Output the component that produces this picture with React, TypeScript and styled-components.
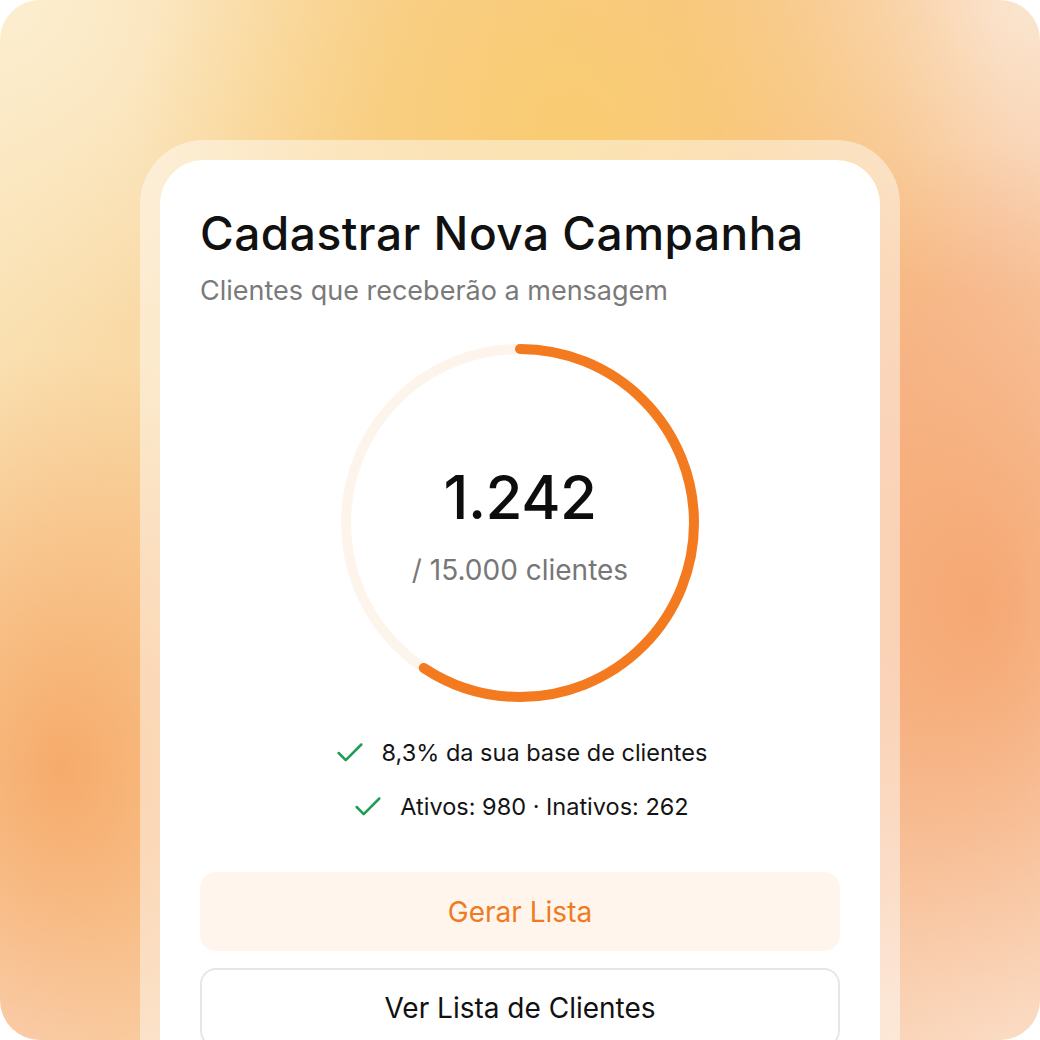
import { createGlobalStyle } from 'styled-components';
import styled from 'styled-components';
import { Check } from 'lucide-react';

const GlobalStyle = createGlobalStyle`
  html, body {
    margin: 0;
    padding: 0;
    background: #ffffff;
  }
  body {
    font-family: Inter, "Noto Sans", "Liberation Sans", sans-serif;
    -webkit-font-smoothing: antialiased;
  }
`;

const Backdrop = styled.div`
  width: 1040px;
  height: 1040px;
  border-radius: 40px;
  overflow: hidden;
  box-sizing: border-box;
  padding-top: 140px;
  display: flex;
  justify-content: center;
  background:
    radial-gradient(ellipse 440px 360px at 55% 12%, rgba(249, 205, 112, 0.9), rgba(249, 205, 112, 0) 100%),
    radial-gradient(ellipse 300px 460px at 94% 58%, rgba(245, 162, 106, 0.85), rgba(245, 162, 106, 0) 100%),
    radial-gradient(ellipse 300px 420px at 6% 74%, rgba(246, 168, 104, 0.95), rgba(246, 168, 104, 0) 100%),
    radial-gradient(ellipse 400px 340px at 0% 0%, rgba(252, 238, 208, 1), rgba(252, 238, 208, 0) 100%),
    radial-gradient(ellipse 380px 360px at 100% 100%, rgba(251, 222, 200, 1), rgba(251, 222, 200, 0) 100%),
    radial-gradient(ellipse 300px 300px at 0% 100%, rgba(251, 220, 198, 1), rgba(251, 220, 198, 0) 100%),
    radial-gradient(ellipse 360px 300px at 100% 0%, rgba(251, 230, 208, 1), rgba(251, 230, 208, 0) 100%),
    linear-gradient(100deg, #fae3b6 0%, #f8c989 45%, #f7b98a 75%, #f9d4b8 100%);
`;

const Frame = styled.div`
  width: 760px;
  box-sizing: border-box;
  padding: 20px 20px 0;
  border-radius: 64px 64px 0 0;
  background: rgba(255, 255, 255, 0.45);
  height: 920px;
`;

const Card = styled.div`
  background: #ffffff;
  border-radius: 44px 44px 0 0;
  height: 100%;
  box-sizing: border-box;
  padding: 45px 40px 0;
  display: flex;
  flex-direction: column;
`;

const Title = styled.h1`
  margin: 0;
  font-size: 46px;
  line-height: 56px;
  font-weight: 500;
  color: #111111;
  letter-spacing: 0.5px;
`;

const Subtitle = styled.p`
  margin: 14px 0 0;
  font-size: 27px;
  line-height: 32px;
  font-weight: 400;
  color: #7a7a7a;
`;

const Gauge = styled.div`
  position: relative;
  width: 360px;
  height: 360px;
  margin: 36px auto 0;
`;

const GaugeLabel = styled.div`
  position: absolute;
  inset: 0;
  display: flex;
  flex-direction: column;
  align-items: center;
  justify-content: center;
  padding-top: 2px;
`;

const Count = styled.div`
  font-size: 60px;
  line-height: 72px;
  font-weight: 500;
  color: #0d0d0d;
  letter-spacing: -0.5px;
`;

const Total = styled.div`
  margin-top: 20px;
  font-size: 28px;
  line-height: 34px;
  color: #777777;
`;

const Facts = styled.ul`
  list-style: none;
  margin: 33px 0 0;
  padding: 0;
  display: flex;
  flex-direction: column;
  align-items: center;
  gap: 20px;
`;

const Fact = styled.li`
  display: flex;
  align-items: center;
  gap: 15px;
  font-size: 23.5px;
  line-height: 30px;
  color: #141414;
`;

const Button = styled.button<{ $variant: 'soft' | 'outline' }>`
  width: 100%;
  height: 79px;
  box-sizing: border-box;
  border-radius: 16px;
  font-family: inherit;
  font-size: 28px;
  font-weight: 400;
  cursor: pointer;
  background: ${p => (p.$variant === 'soft' ? '#fff5ec' : '#ffffff')};
  color: ${p => (p.$variant === 'soft' ? '#f07a22' : '#111111')};
  border: ${p => (p.$variant === 'soft' ? 'none' : '2px solid #e6e6e6')};
`;

const Actions = styled.div`
  margin-top: 48px;
  display: flex;
  flex-direction: column;
  gap: 17px;
`;

const R = 174;
const C = 2 * Math.PI * R;
const progress = 0.593;

export default function App() {
  return (
    <>
      <GlobalStyle />
      <Backdrop>
        <Frame>
          <Card>
            <Title>Cadastrar Nova Campanha</Title>
            <Subtitle>Clientes que receberão a mensagem</Subtitle>
            <Gauge>
              <svg width="360" height="360" viewBox="0 0 360 360">
                <circle cx="180" cy="180" r={R} fill="none" stroke="#fdf4ec" strokeWidth="10" />
                <circle
                  cx="180"
                  cy="180"
                  r={R}
                  fill="none"
                  stroke="#f47a1f"
                  strokeWidth="10"
                  strokeLinecap="round"
                  strokeDasharray={`${C * progress} ${C}`}
                  transform="rotate(-90 180 180)"
                />
              </svg>
              <GaugeLabel>
                <Count>1.242</Count>
                <Total>/ 15.000 clientes</Total>
              </GaugeLabel>
            </Gauge>
            <Facts>
              <Fact>
                <Check size={34} color="#1f9d55" strokeWidth={1.8} />
                8,3% da sua base de clientes
              </Fact>
              <Fact>
                <Check size={34} color="#1f9d55" strokeWidth={1.8} />
                Ativos: 980 · Inativos: 262
              </Fact>
            </Facts>
            <Actions>
              <Button $variant="soft">Gerar Lista</Button>
              <Button $variant="outline">Ver Lista de Clientes</Button>
            </Actions>
          </Card>
        </Frame>
      </Backdrop>
    </>
  );
}
